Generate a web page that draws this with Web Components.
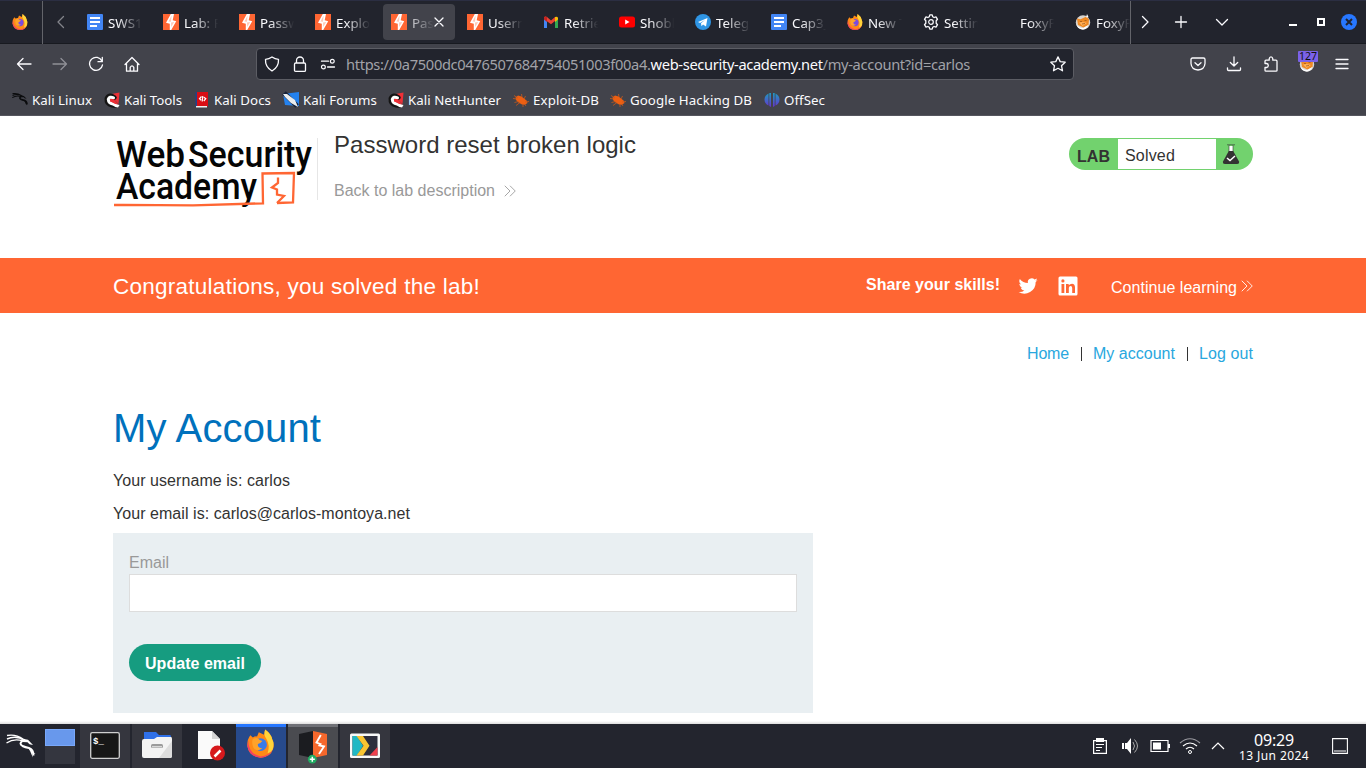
<!DOCTYPE html>
<html lang="en">
<head>
<meta charset="utf-8">
<title>Password reset broken logic</title>
<style>
html,body{margin:0;height:100%;overflow:hidden;background:#fff}
</style>
</head>
<body>
<kali-screen></kali-screen>
<script>
const bolt = '<path fill="#f63" d="M0 0h16v16H0z"/><path fill="#fff" d="M7.800 0h3.200L9.700 6.300l3.500.9L8.200 16H6.800V9.800L3 8.700z"/><path fill="#f63" d="M8.600 1.500 8 7.800 5.500 7.600zM8 8.600l3.200-.5-3 5z" opacity=".35"/>';
const fox = '<path fill="#ff8a16" d="M2.200 3.200 3.600 4.600Q5 3.600 6 4L7 1.600 10 3l.6-3Q14 2.500 14.600 5.500 16 8 15.200 10.800 13.500 16 8 16 1.500 15.500.5 9.500.2 5.700 2.200 3.200z"/><path fill="#f34064" d="M1 6Q1 14 8 15.300 13 15 15.200 11 13 16 8 16 1.500 15.500.5 9.500z"/><path fill="#ffd43a" d="M10.600 0Q14 2.500 14.600 5.500 16 8 14.800 11.500 13.500 13.500 12 13.500 13.500 9 11.400 5.500 9.500 3 10.600 0z"/><circle cx="8" cy="8.600" r="3.600" fill="#7a4be0"/><path fill="#ffa32a" d="M3.500 5.500Q6 4 7.500 6L9 6.600Q8 8 6.500 8.200 6 10.500 9 10.600 6 13 4 10.500 2.800 8 3.500 5.500z"/>';
const docs = '<rect width="16" height="16" rx="1" fill="#4285f4"/><path fill="#fff" d="M3 3h10v2H3zM3 7h10v2H3zM3 11h7v2H3z"/>';
const foxy = '<circle cx="8" cy="8.500" r="7.200" fill="#d9d5cf"/><path fill="#f08a24" d="M2 4.500l3.500.8 6-2.800 2.500 3-.5 5.500-5 2.500-5.500-2.500z"/><path fill="#ffb25c" d="M4 8.500l3.500 3.500 4.500-3-4-1z"/><path fill="#fff" d="M12 0l1.500 3-2.500.5zM1.200 10q3 4.500 7 4l5.300-3q-2 4.500-6 4.500-5-.5-6.300-5.500z"/><path stroke="#a05a1a" fill="none" stroke-width=".8" d="M5 7.500h2M9.500 6.500h2M7 10l3-.5"/>';
const tools = '<path fill="#ee3037" d="M5 2.500 15.500.5 14.500 12z"/><path fill="none" stroke="#141414" stroke-width="4.500" stroke-linecap="round" d="M10.500 5.500Q5 1.500 2.800 6.500 2.200 12 8 13.300l4 .5"/><path fill="none" stroke="#fff" stroke-width="3" stroke-linecap="round" d="M9.500 5.800Q5.500 4 4.300 7.300 4.500 11 9 12l3.500 1.800"/><path fill="#ee3037" d="M6 7l3.500 0 5 5.500-2 .3-4-2.300-2.500-1z"/><path fill="#fff" d="M11 12l4.500 1-1.500 2.500-3-1z"/>';
const bug = '<path fill="#ed5f12" d="M2.500 5.500 5 3.500 8.500 4.500 10.500 6 13.500 8.500 14.500 11 12 12.800 9 12.500 5.500 10.500 3 8z"/><path fill="none" stroke="#c9591c" stroke-width=".8" d="M1 3.500l4 2.500M0 6.500l4 .5M3 13.500l4-3M1.500 10.500l4-1M8.500 2l.5 3M12.500 4l-1.500 3M16 9.500l-4 .5M10 15l0-3M13 14l-1.500-2"/>';
const line = (d, extra='') => `<path fill="none" stroke="#fbfbfe" stroke-width="1.300" stroke-linecap="round" stroke-linejoin="round" ${extra} d="${d}"/>`;
const dragon = '<path fill="none" stroke="currentColor" stroke-width="1.400" d="M1 4.500Q9 .5 19 5.500M.5 8.500Q8 3.500 17 6.500M1 1Q10-.5 17 4.500"/><path fill="none" stroke="currentColor" stroke-width="2" d="M16.500 6.500Q12.500 9 16.500 11.500 19 12.800 23 13.500 27.500 15 27.500 21"/><path fill="currentColor" d="M15 4l7 1.200 5 5.300-3.500-.8-2-2-5-.2zM22 13l7.500 6.500-3-.7.300 4.200-2.500-6z"/>';

const ICONS = {
 bolt:[16,bolt], fox:[16,fox], docs:[16,docs], foxy:[16,foxy], tools:[16,tools], bug:[16,bug], blank:[16,''],
 gmail:[16,'<path fill="#4285f4" d="M1 4v10h3V7z"/><path fill="#34a853" d="M15 4v10h-3V7z"/><path fill="#ea4335" d="M1 3.500Q2 2 4 3l4 3.500L12 3v4l-4 3.300L1 5z"/><path fill="#fbbc04" d="M12 3q2.500-1 3 1v1.500L12 8z"/><path fill="#c5221f" d="M1 3.500Q2 2 4 3v5L1 5.500z"/>'],
 youtube:[16,'<rect y="2.500" width="16" height="11" rx="2.500" fill="#f00"/><path fill="#fff" d="M6.200 5.500v5L10.500 8z"/>'],
 telegram:[16,'<circle cx="8" cy="8" r="8" fill="#2f95e4"/><path fill="#fff" d="M3 8l9.500-4L11 12.500 8 10.500l-1.500 1.700-.5-3L10 6 5 9z"/>'],
 gear:[16,'<circle cx="8" cy="8" r="2.300" fill="none" stroke="#fbfbfe" stroke-width="1.200"/>'+line('M6.800.8h2.400l.5 1.900 1.400.8 1.900-.6 1.500 2.400-1.300 1.500v2.400l1.300 1.500-1.500 2.400-1.900-.6-1.400.8-.5 1.900H6.800l-.5-1.900-1.400-.8-1.900.6-1.500-2.400L2.800 9.200V6.800L1.500 5.300 3 2.900l1.900.6 1.400-.8z')],
 close:[16,line('M4 4l8 8M12 4l-8 8')],
 left:[16,line('M10.500 2.500 5 8l5.500 5.500','opacity=".45"')], right:[16,line('M5.500 2.500 11 8l-5.500 5.500')],
 down:[16,line('M2.500 5.500 8 11l5.500-5.500')], plus:[16,line('M8 2.500v11M2.500 8h11')],
 winclose:[16,'<circle cx="8" cy="8" r="8" fill="#2777ff"/><path stroke="#20242f" stroke-width="2" d="M5 5l6 6M11 5l-6 6"/>'],
 back:[16,line('M15 8H1.500M7 2.500 1.500 8 7 13.500')], forward:[16,line('M1 8h13.500M9 2.500 14.500 8 9 13.500','opacity=".42"')],
 reload:[16,line('M14.300 1.500V5.700H10M14 5.200A6.500 6.500 0 1 0 14.500 8.800')],
 home:[16,line('M1 8.500 8 1.500l7 7M2.500 7.500v7.700h11V7.500M6.200 15v-3.700q1.800-3 3.600 0V15')],
 shield:[16,line('M8 1Q11 3.200 14.500 3.300 15 11 8 15 1 11 1.500 3.300 5 3.200 8 1z')],
 lock:[16,line('M4.500 7V4.500a3.500 3.500 0 0 1 7 0V7M3.700 7h8.600q1.200 0 1.200 1.200v6q0 1.200-1.200 1.200H3.700q-1.200 0-1.200-1.200v-6Q2.500 7 3.700 7z')],
 perms:[16,line('M1.500 5.200h7M7.500 11h7')+'<circle cx="12.300" cy="5.200" r="1.900" fill="none" stroke="#fbfbfe" stroke-width="1.200"/><circle cx="3.400" cy="11" r="1.900" fill="none" stroke="#fbfbfe" stroke-width="1.200"/>'],
 star:[16,line('M8 .9l2.200 4.700 5 .6-3.700 3.500 1 5.100L8 12.300l-4.500 2.500 1-5.100L.8 6.200l5-.6z')],
 pocket:[16,line('M2.500 2h11q1.500 0 1.500 1.500V7.500Q14.500 13.500 8 14 1.500 13.500 1 7.500V3.500Q1 2 2.500 2zM5 6.800l3 2.700 3-2.700')],
 download:[16,line('M8 .8v9M4.300 6.500 8 10l3.700-3.500M1.500 11.800v1.700q0 1 1 1h11q1 0 1-1v-1.700')],
 puzzle:[16,line('M2 7.500V5.200q0-1 1-1h3.200V2.800q.3-2 1.800-2t1.800 2v1.400H13q1 0 1 1v9.300q0 .7-1 .7H3q-1 0-1-1v-2.700h1.700q1.600-.3 1.600-2t-1.600-2z')],
 menu:[16,line('M2 3.500h12M2 8h12M2 12.500h12')],
 kali:[16,'<g color="#0b0c0e" transform="scale(.54) translate(0 2)" stroke-width="2"><g>'+dragon.replace('stroke-width="1.400"','stroke-width="2"').replace('stroke-width="2" d="M16.5','stroke-width="3" d="M16.5')+'</g></g>'],
 kdocs:[16,'<path fill="#23408a" d="M1.500 0H4v15H1.500z"/><path fill="#d90d14" d="M3 0h11v14.500H3z"/><path fill="#eee" d="M2 14h11v1.500H2z"/><path fill="none" stroke="#fff" stroke-width="1.200" d="M7.500 4.500 5.500 6.800l1.700 1.400M9.800 5.200l2 1.500L9.800 9M8.800 4l-.6 5.500"/>'],
 forums:[16,'<path fill="#2482ef" d="M0 2 16 0v14l-14-1z"/><path stroke="#172136" stroke-width="5" d="M1 1l13 13"/><path fill="#e9edf0" d="M0 2l4 0 8 6 3 7-7-4-6-6z"/>'],
 offsec:[16,'<defs><linearGradient id="o" x1="0" y1="0" x2="0" y2="16" gradientUnits="userSpaceOnUse"><stop stop-color="#19a3bf"/><stop offset="1" stop-color="#6a2bd0"/></linearGradient></defs><path fill="url(#o)" d="M4.500 1.500v12Q.5 11.500.5 7.500T4.500 1.500zM5.300 1H7v14l-1.700-1zM9 1h1.700v13L9 15zM11.500 1.500q4 2 4 6t-4 6z"/>'],
 chevrons:[16,'<path fill="none" stroke="currentColor" stroke-width="1" d="M2 2l6 6-6 6M8 2l6 6-6 6"/>'],
 flask:[20,'<path fill="#fff" d="M8 2h4v6H8z"/><path stroke="#333332" stroke-width="1" opacity=".6" d="M6 .8h8M8 1v7M12 1v7"/><path fill="#333332" d="M7.800 7h4.400L18 17.500q.5 2.500-2 2.500H4q-2.500 0-2-2.500z"/><path fill="none" stroke="#fff" stroke-width="1.500" d="M6 14l3 2.500 5-4.500"/>'],
 twitter:[24,'<path fill="#fff" d="M23.600 4.900c-.8.400-1.700.6-2.700.8 1-.6 1.700-1.500 2-2.600-.9.500-1.900.9-3 1.100A4.700 4.700 0 0 0 11.900 8.500C8 8.300 4.600 6.400 2.200 3.500c-1.300 2.200-.6 4.900 1.500 6.300-.8 0-1.500-.2-2.100-.6 0 2.300 1.600 4.200 3.800 4.700-.7.200-1.400.2-2.100.1.600 1.900 2.300 3.200 4.400 3.300A9.500 9.500 0 0 1 .7 19.200 13.500 13.500 0 0 0 21.200 7.300c.9-.6 1.700-1.500 2.400-2.400z"/>'],
 linkedin:[20,'<rect x=".5" y=".5" width="19" height="19" rx="1.500" fill="#fff"/><path fill="#f63" d="M3.500 8h2.800v9H3.500zM8 8h2.700v1.300Q12 7.800 14 7.800q3 .2 3 3.700V17h-2.800v-5q0-1.900-1.600-1.900T10.800 12v5H8z"/><circle cx="4.900" cy="4.900" r="1.600" fill="#f63"/>'],
 dragon:[32,'<g color="#fff" transform="translate(1 4.500)">'+dragon+'</g>'],
 terminal:[32,'<rect x="1.700" y="2.700" width="28.600" height="25.600" rx="1.500" fill="#171717" stroke="#cfcfcf" stroke-width="1.300"/><text x="4" y="14" font-family="Liberation Mono,monospace" font-size="9" font-weight="700" fill="#fff">$_</text>'],
 folder:[32,'<path fill="#2f70e8" d="M3 2h12l3 3h11q1 0 1 2v5H3z"/><path fill="#f3f3f3" d="M3 9h10l3-2h14q1 0 1 2v17q0 2-2 2H3q-2 0-2-2V11q0-2 2-2z"/><path fill="#ddd" d="M31 11v15q0 2-2 2H18z"/><rect x="10" y="14" width="12" height="4" rx="1.500" fill="#9b9b9b"/><path fill="#d8d8d8" d="M11 16h10v1.500H11z"/>'],
 docedit:[32,'<path fill="#fafafa" d="M5 1h14l8 8v20H5z"/><path fill="#d5d5d5" d="M19 1v8h8z"/><circle cx="24.500" cy="23" r="7.500" fill="#d7191c"/><path stroke="#fff" stroke-width="2.500" d="M21.500 26.500l6-6"/>'],
 firefox:[32,'<g transform="translate(1.500 -.5) scale(1.760)">'+fox.replace('#7a4be0','#387be8')+'</g>'],
 burp:[32,'<path fill="#1b1c20" d="M2 4 16 1v27L2 25z"/><path fill="#f6682c" d="M16 1l14 3v21l-14 3z"/><path fill="none" stroke="#fff" stroke-width="1.900" d="M23.800 5 19.500 12.500l4 1.700-1 1.300 4.500 1-5 7.500"/><circle cx="15.300" cy="29.200" r="4.400" fill="#20ac62"/><path stroke="#fff" stroke-width="1.500" d="M12.800 29.200h5M15.300 26.700v5"/>'],
 player:[32,'<rect x="1" y="3.500" width="30" height="24.500" rx="1.500" fill="#f8f8f8"/><path fill="#2d2e3c" d="M3.500 6h25v19.500h-25z"/><path fill="#20b8c4" d="M3.500 6H8l6 9.700-6 9.800H3.500z"/><path fill="#f9c532" d="M7.500 6H14l6.500 9.700L14 25.500H7.500l7-9.800z"/><path fill="#ee3f4c" d="M28.500 17v8.500h-8z"/>'],
 clip:[16,'<path fill="none" stroke="#fff" stroke-width="1.200" d="M1.600 2.600h12.800v12.800H1.600z"/><path fill="#fff" d="M4 0h8v4H4zM4 6h8v1H4zM4 9h6v1H4zM4 12h4v1H4z"/>'],
 speaker:[16,'<path fill="#fff" d="M0 5h2v6H0zM3 5h2l4-5v16l-4-5H3z"/><path fill="none" stroke="#aaa" d="M11 4q3 4 0 8M12.500 1.500q6 6.500 0 13"/>'],
 battery:[20,'<path fill="none" stroke="#fff" stroke-width="1.200" d="M1 4.500h17v11H1z"/><path fill="#fff" d="M3 6.500h8v7H3zM18 8h2v4h-2z"/>'],
 wifi:[20,'<path fill="none" stroke="#9b9ba1" stroke-width="1.200" d="M0 7Q10-1.500 20 7"/><path fill="none" stroke="#fff" stroke-width="1.200" d="M3 10Q10 4 17 10M6 13q4-3.500 8 0"/><circle cx="10" cy="16" r="1.500" fill="none" stroke="#fff"/>'],
 up:[16,'<path fill="none" stroke="#fff" stroke-width="1.200" d="M2 11 8 5l6 6"/>'],
 desk:[16,'<path fill="none" stroke="#fff" stroke-width="1.100" d="M.6.6h14.800v14.800H.6zM2 13h12"/>']
};

function define(tag, css, html) {
  customElements.define(tag, class extends HTMLElement {
    constructor() {
      super();
      const root = this.attachShadow({mode:'open'});
      const t = document.createElement('template');
      t.innerHTML = `<style>*{box-sizing:border-box}${css}</style>${html}`;
      root.append(t.content.cloneNode(true));
    }
  });
}

/* Vector icon: name and size in pixels. */
customElements.define('ui-icon', class extends HTMLElement {
  connectedCallback() {
    if (this.shadowRoot) return;
    const [box, art] = ICONS[this.getAttribute('name')];
    const s = this.getAttribute('size') || 16;
    this.attachShadow({mode:'open'}).innerHTML =
      `<style>:host{display:block;flex:none;width:${s}px;height:${s}px}svg{display:block;overflow:visible}</style><svg width="${s}" height="${s}" viewBox="0 0 ${box} ${box}">${art}</svg>`;
  }
});

/* One line of text whose tracking is adjusted to fill the given width. */
customElements.define('fit-text', class extends HTMLElement {
  connectedCallback() {
    if (this.shadowRoot) return;
    this.attachShadow({mode:'open'}).innerHTML = '<style>:host{display:block;flex:none;white-space:nowrap}span{display:inline-block}</style><span><slot></slot></span>';
    const w = +this.getAttribute('w'), span = this.shadowRoot.querySelector('span');
    this.style.width = w + 'px';
    span.style.letterSpacing = (w - span.getBoundingClientRect().width) / this.textContent.length + 'px';
  }
});

define('browser-tab', `
:host{display:flex;flex:none;align-items:center;width:72px;height:36px;margin-right:4px;padding-left:8px;border-radius:4px;gap:5px;position:relative}
:host([active]){background:#42434b}
.t{width:36px;overflow:hidden;white-space:nowrap;line-height:20px;padding-top:1px;-webkit-mask-image:linear-gradient(90deg,#000 25%,transparent 95%);mask-image:linear-gradient(90deg,#000 25%,transparent 95%)}
:host([active]) .t{width:22px;-webkit-mask-image:linear-gradient(90deg,rgba(0,0,0,.75),transparent);mask-image:linear-gradient(90deg,rgba(0,0,0,.75),transparent)}
slot[name=end]{display:block}`, `<slot name="icon"></slot><div class="t"><slot></slot></div><slot name="end"></slot>`);

const tabs = [['docs','SWS101'],['bolt','Lab: Pa'],['bolt','Password'],['bolt','Exploit'],['bolt','Password',1],['bolt','Username'],['gmail','Retrieve'],['youtube','Shobha'],['telegram','Telegram'],['docs','Cap3_re'],['fox','New Tab'],['gear','Settings'],['blank','FoxyProxy']];
const tab = ([i,t,a]) => `<browser-tab ${a?'active':''}><ui-icon slot="icon" name="${i}"></ui-icon>${t}${a?'<ui-icon slot="end" name="close" size="16" style="margin-left:-8px"></ui-icon>':''}</browser-tab>`;

define('tab-strip', `
:host{display:flex;height:44px;background:#22242d;border-top:1px solid #2b2e42;border-bottom:1px solid #181a20;color:#fbfbfe;font-size:13.300px;align-items:center}
.pin{width:43px;height:43px;border-right:1px solid #63646a;display:flex;align-items:center;padding-left:12px}
.left{width:36px;padding-left:10px}
.tabs{display:flex;width:1052px;height:43px;align-items:center;border-right:1px solid #63646a;overflow:hidden}
.ctl{display:flex;flex:1;align-items:center;padding-left:6px}
.min{width:8px;height:2px;background:#fff;margin:5px 20px 0 59px}.max{width:8px;height:8px;border:2px solid #fff;margin-right:16px}`,
`<div class="pin"><ui-icon name="fox"></ui-icon></div><div class="left"><ui-icon name="left"></ui-icon></div>
<div class="tabs">${tabs.map(tab).join('')}<browser-tab><ui-icon slot="icon" name="foxy"></ui-icon>FoxyP</browser-tab></div>
<div class="ctl"><ui-icon name="right"></ui-icon><ui-icon name="plus" style="margin-left:20px"></ui-icon><ui-icon name="down" style="margin-left:25px"></ui-icon><div class="min"></div><div class="max"></div><ui-icon name="winclose"></ui-icon></div>`);

define('nav-bar', `
:host{display:flex;height:40px;background:#42434b;align-items:center;padding:0 16px;position:relative}
.nav{display:flex;gap:20px;width:240px}
.url{display:flex;align-items:center;width:818px;height:32px;border:1px solid #5c5d64;border-radius:4px;background:#22242d;padding:0 7px;color:#a1a2a8;font-size:14.670px;line-height:20px}
.url .i{display:flex;gap:12px;width:82px}.url b{color:#fbfbfe;font-weight:400}
.r{display:flex;gap:20px;margin-left:auto}
.ext{position:relative}.n{position:absolute;left:-1px;top:-5px;width:20px;height:11px;background:#7b62ea;border-radius:1px;color:#111;font-size:10.500px;line-height:11px;text-align:center}`,
`<div class="nav"><ui-icon name="back"></ui-icon><ui-icon name="forward"></ui-icon><ui-icon name="reload"></ui-icon><ui-icon name="home"></ui-icon></div>
<div class="url"><div class="i"><ui-icon name="shield"></ui-icon><ui-icon name="lock"></ui-icon><ui-icon name="perms"></ui-icon></div><fit-text w="624">https://0a7500dc0476507684754051003f00a4.<b>web-security-academy.net</b>/my-account?id=carlos</fit-text><ui-icon name="star" style="margin-left:auto"></ui-icon></div>
<div class="r"><ui-icon name="pocket"></ui-icon><ui-icon name="download"></ui-icon><ui-icon name="puzzle" style="margin-left:1px"></ui-icon><div class="ext"><ui-icon name="foxy"></ui-icon><div class="n">127</div></div><ui-icon name="menu" style="margin-left:-1px"></ui-icon></div>`);

define('bookmark-item', `:host{display:flex;flex:none;align-items:center;gap:4px}`, `<slot></slot>`);
const marks = [['kali','Kali Linux',60,92],['tools','Kali Tools',58,90],['kdocs','Kali Docs',57,89],['forums','Kali Forums',74,105],['tools','Kali NetHunter',93,125],['bug','Exploit-DB',66,97],['bug','Google Hacking DB',122,154],['offsec','OffSec',41,80]];
define('bookmark-bar', `:host{display:flex;height:32px;background:#42434b;border-bottom:1px solid #55565e;padding-left:12px;color:#fbfbfe;font-size:13.300px;line-height:20px}`,
 marks.map(([i,t,w,s]) => `<bookmark-item style="width:${s}px"><ui-icon name="${i}"></ui-icon><fit-text w="${w}">${t}</fit-text></bookmark-item>`).join(''));

define('academy-logo', `:host{display:block;width:200px;height:75px}svg{display:block;overflow:visible}text{font-family:Roboto,sans-serif;font-weight:500;fill:#050505}`,
`<svg width="200" height="75" viewBox="0 0 200 75"><text x="3" y="28.500" font-size="37" textLength="69" lengthAdjust="spacingAndGlyphs">Web</text><text x="75" y="28.500" font-size="37" textLength="124" lengthAdjust="spacingAndGlyphs">Security</text><text x="3" y="61" font-size="37" textLength="141" lengthAdjust="spacingAndGlyphs">Academy</text>
<path fill="none" stroke="#f63" stroke-width="2.300" d="M1 67 10 66.800 80 67.300 150 65.300 149.500 35.500 181 35 180 64.500 164 65"/><path fill="none" stroke="#f63" stroke-width="2.300" d="M165 39.500V45L159 49.500 164 51.500 164 56.500 171 58 164 65"/></svg>`);

define('lab-status', `:host{display:flex;width:184px;height:32px;border-radius:16px;background:#72d26e;align-items:center;color:#333332;font-size:16px;line-height:20px;padding-left:8px}
.s{width:98px;height:30px;background:#fff;padding:7px 0 0 7px;margin-left:8px}`,
`<fit-text w="33" style="font-weight:700;padding-top:5px">LAB</fit-text><div class="s"><fit-text w="50">Solved</fit-text></div><ui-icon name="flask" size="20" style="margin-left:5px"></ui-icon>`);

define('lab-header', `:host{display:flex;height:142px;padding:22px 113px 0;color:#333332}
.sep{width:1px;height:62px;background:#e6e6e6;margin-left:4px}.txt{margin-left:16px}.title{font-size:24px;line-height:28px;margin-top:-7px}
.back{display:flex;align-items:center;color:#999;font-size:16px;line-height:20px;margin-top:22px;gap:8px}lab-status{margin-left:auto}`,
`<academy-logo></academy-logo><div class="sep"></div><div class="txt"><fit-text class="title" w="302">Password reset broken logic</fit-text><div class="back"><fit-text w="161">Back to lab description</fit-text><ui-icon name="chevrons" size="14" style="margin-top:-1px"></ui-icon></div></div><lab-status></lab-status>`);

define('solved-banner', `:host{display:flex;height:55px;padding:0 112px 0 113px;background:#f63;color:#fff;align-items:center;font-size:16px;line-height:20px}
.share{display:flex;margin-left:auto;align-items:center}.next{display:flex;align-items:center;gap:3px;margin-left:33px}`,
`<fit-text w="367" style="font-size:22.500px;line-height:28px;padding-top:2px">Congratulations, you solved the lab!</fit-text>
<div class="share"><fit-text w="134" style="font-weight:700;margin-top:-2px">Share your skills!</fit-text><ui-icon name="twitter" size="20" style="margin-left:18px"></ui-icon><ui-icon name="linkedin" size="20" style="margin-left:20px;margin-top:1px"></ui-icon><div class="next"><fit-text w="126" style="padding-top:4px">Continue learning</fit-text><ui-icon name="chevrons" size="14"></ui-icon></div></div>`);

define('email-form', `:host{display:block;width:700px;height:180px;padding:20px 16px 0;background:#e9eff2;font-size:16px;line-height:20px}
.label{color:#999}input{display:block;width:668px;height:38px;border:1px solid #ddd;background:#fff;margin:1px 0 32px;padding:0}
button{display:flex;width:132px;height:37px;border:0;border-radius:19px;background:#169c80;color:#fff;font:700 16px/20px "Liberation Sans",sans-serif;padding:2px 0 0;align-items:center;justify-content:center}`,
`<fit-text class="label" w="40">Email</fit-text><input aria-label="Email"><button><fit-text w="100">Update email</fit-text></button>`);

define('account-page', `:host{display:block;flex:1;padding:0 113px;color:#333332;font-size:16px;line-height:20px}
nav{display:flex;justify-content:flex-end;padding-top:31px;color:#29a7de}i{width:1px;height:14px;background:#333;margin:3px 11px 0 12px}
h1{font-size:40px;line-height:46px;font-weight:400;color:#0071bc;margin:41px 0 20px}`,
`<nav><fit-text w="42">Home</fit-text><i></i><fit-text w="82">My account</fit-text><i></i><fit-text w="54">Log out</fit-text></nav>
<h1><fit-text w="208">My Account</fit-text></h1><fit-text w="177">Your username is: carlos</fit-text><fit-text w="297" style="margin:13px 0 9px">Your email is: carlos@carlos-montoya.net</fit-text><email-form></email-form>`);

define('task-button', `:host{display:flex;flex:none;width:50px;height:44px;margin-right:2px;align-items:center;justify-content:center;background:#35363e}
:host([plain]){background:none}:host([focus]){background:linear-gradient(#2777ff 3px,#274a8c 3px)}:host([multi]){background:linear-gradient(#707177 3px,#4a4b50 3px)}`, `<slot></slot>`);

define('task-bar', `:host{display:flex;height:44px;background:#23252e;color:#fff;align-items:center;position:relative;flex:none}
:host::before{content:"";position:absolute;left:0;right:0;top:-3px;height:3px;background:linear-gradient(#fff,#dedede)}
.k{width:45px;padding-left:5px}.pager{width:30px;height:35px;background:#34363f;margin-right:5px}.pager div{height:17px;background:#6898ec;border:1px solid #79a8fa}
.tray{display:flex;margin-left:auto;align-items:center;padding-right:18px}.clock{width:72px;text-align:center;margin:0 22px 0 12px}`,
`<div class="k"><ui-icon name="dragon" size="32"></ui-icon></div><div class="pager"><div></div></div>
<task-button><ui-icon name="terminal" size="32"></ui-icon></task-button><task-button><ui-icon name="folder" size="32"></ui-icon></task-button><task-button plain><ui-icon name="docedit" size="32"></ui-icon></task-button><task-button focus><ui-icon name="firefox" size="32"></ui-icon></task-button><task-button multi><ui-icon name="burp" size="32"></ui-icon></task-button><task-button><ui-icon name="player" size="32"></ui-icon></task-button>
<div class="tray"><ui-icon name="clip"></ui-icon><ui-icon name="speaker" style="margin-left:14px"></ui-icon><ui-icon name="battery" size="20" style="margin-left:12px"></ui-icon><ui-icon name="wifi" size="20" style="margin-left:10px"></ui-icon><ui-icon name="up" size="16" style="margin-left:10px"></ui-icon>
<div class="clock"><fit-text w="40" style="font-size:16px;line-height:17px;margin:1px auto 0">09:29</fit-text><fit-text w="70" style="font-size:12px;line-height:13px;margin:0 auto">13 Jun 2024</fit-text></div><ui-icon name="desk"></ui-icon></div>`);

define('kali-screen', `:host{display:flex;flex-direction:column;width:1366px;height:768px;overflow:hidden;font-family:"Noto Sans",sans-serif}
lab-header,solved-banner,account-page{font-family:"Liberation Sans",Arial,sans-serif}`,
`<tab-strip></tab-strip><nav-bar></nav-bar><bookmark-bar></bookmark-bar><lab-header></lab-header><solved-banner></solved-banner><account-page></account-page><task-bar></task-bar>`);
</script>
</body>
</html>
